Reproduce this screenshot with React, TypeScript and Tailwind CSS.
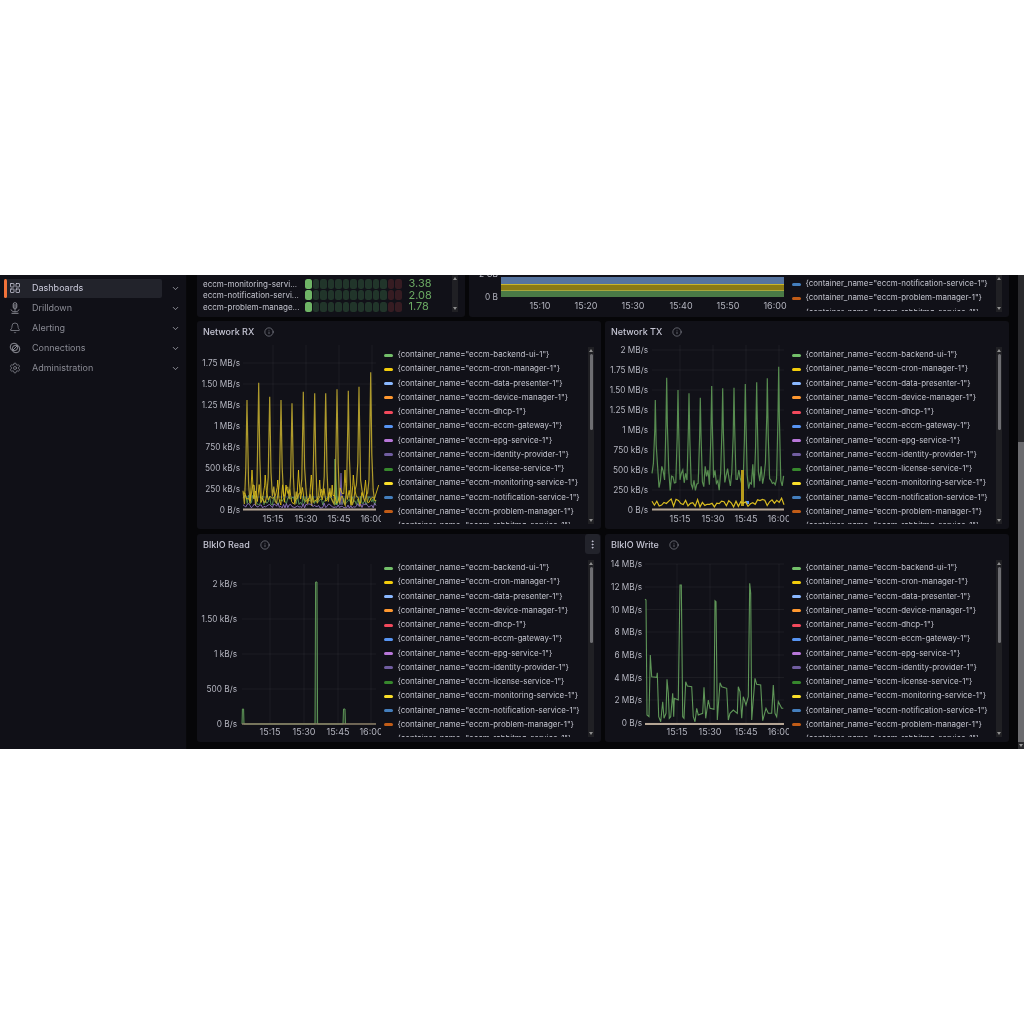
import { Bell, ChevronDown, Info, LayoutGrid, MoreVertical, Settings } from 'lucide-react';

type Pt = [number, number];

const SERIES = [
  ['eccm-backend-ui-1', 'bg-[#73bf69]'],
  ['eccm-cron-manager-1', 'bg-[#f2cc0c]'],
  ['eccm-data-presenter-1', 'bg-[#8ab8ff]'],
  ['eccm-device-manager-1', 'bg-[#ff9830]'],
  ['eccm-dhcp-1', 'bg-[#f2495c]'],
  ['eccm-eccm-gateway-1', 'bg-[#5794f2]'],
  ['eccm-epg-service-1', 'bg-[#b877d9]'],
  ['eccm-identity-provider-1', 'bg-[#705da0]'],
  ['eccm-license-service-1', 'bg-[#37872d]'],
  ['eccm-monitoring-service-1', 'bg-[#fade2a]'],
  ['eccm-notification-service-1', 'bg-[#447ebc]'],
  ['eccm-problem-manager-1', 'bg-[#c15c17]'],
  ['eccm-rabbitmq-service-1', 'bg-[#890f02]'],
];

const rng = (seed: number) => () => {
  seed = (seed * 1664525 + 1013904223) % 4294967296;
  return seed / 4294967296;
};

const toPath = (pts: Pt[]) => pts.map(([x, y]) => `${x.toFixed(1)},${y.toFixed(1)}`).join(' ');

// peaks with a noisy floor between them, all in page coordinates
function spikes(peaks: Pt[], x0: number, x1: number, top: number, bottom: number, seed: number, step = 1.4): string {
  const r = rng(seed);
  const pts: Pt[] = [];
  for (let x = x0; x <= x1; x += step) {
    let y = top + (bottom - top) * Math.pow(r(), 0.7);
    for (const [px, py] of peaks) {
      const d = Math.abs(x - px);
      if (d < 3) y = Math.min(y, bottom - (bottom - py) * Math.pow(1 - d / 3, 2));
    }
    pts.push([x, y]);
  }
  // the samples step over the tips, so put the tips in by hand
  return toPath([...pts, ...peaks].sort((a, b) => a[0] - b[0]));
}

const RX_PEAKS: Pt[] = [[21, 180], [56, 128], [89, 170], [123, 180], [156, 190], [190, 155], [224, 160], [257, 160], [291, 148], [325, 152], [357, 140], [392, 97]].map(([x, y]) => [240 + x / 3, 340 + y / 3]);
const RX_MINOR: Pt[] = RX_PEAKS.map(([x], i) => [x + 5 + (i % 3) * 1.5, 470 + (i % 4) * 5]);
const TX_PEAKS: Pt[] = [[46, 180], [80, 113], [114, 150], [147, 160], [181, 173], [215, 138], [248, 145], [282, 143], [316, 132], [350, 127], [382, 115], [416, 80]].map(([x, y]) => [640 + x / 3, 340 + y / 3]);
const WRITE: Pt[] = ([[15, 148], [18, 150], [21, 495], [27, 500], [31, 315], [35, 380], [50, 382], [52, 368], [56, 500], [62, 515], [68, 455], [72, 505], [78, 490], [81, 388], [85, 430], [88, 505], [92, 500], [98, 430], [101, 500], [103, 445], [115, 450], [120, 105], [124, 105], [128, 500], [132, 505], [137, 395], [142, 408], [155, 410], [160, 500], [165, 515], [170, 475], [175, 495], [188, 490], [192, 412], [197, 505], [205, 450], [210, 475], [222, 478], [225, 152], [228, 155], [232, 510], [240, 398], [245, 410], [260, 415], [265, 510], [270, 490], [280, 480], [292, 490], [295, 410], [300, 425], [305, 505], [310, 440], [318, 465], [325, 440], [329, 100], [332, 130], [335, 510], [345, 385], [350, 403], [362, 405], [368, 512], [378, 475], [385, 490], [395, 490], [400, 405], [405, 490], [410, 500], [415, 455], [425, 475], [430, 475]] as Pt[]).map(([x, y]) => [640 + x / 3, 550 + y / 3] as Pt);

type Tick = [string, number];

function Axes({ ticks, times, right, x0, x1, top, bottom }: { ticks: Tick[]; times: number[]; right: number; x0: number; x1: number; top: number; bottom: number }) {
  const labels = ['15:15', '15:30', '15:45', '16:00'];
  return (
    <g className="fill-[#b4b5bf]">
      {ticks.map(([label, y]) => (
        <g key={label}>
          <line x1={x0} x2={x1} y1={y} y2={y} stroke="#ffffff" strokeOpacity={0.05} />
          <text x={right} y={y + 3} textAnchor="end" className="text-[8.25px]">{label}</text>
        </g>
      ))}
      {times.map((x, i) => (
        <g key={x}>
          <line x1={x} x2={x} y1={top} y2={bottom} stroke="#ffffff" strokeOpacity={0.05} />
          <text x={x} y={bottom + 12} textAnchor="middle" className="text-[9px]">{labels[i]}</text>
        </g>
      ))}
    </g>
  );
}

function RxChart() {
  return (
    <svg viewBox="197 343 184 186" className="w-[184px] h-[186px] shrink-0">
      <Axes x0={243} x1={376} top={345} bottom={510} right={240} times={[273, 306, 339, 372]}
        ticks={[['1.75 MB/s', 363], ['1.50 MB/s', 384], ['1.25 MB/s', 405], ['1 MB/s', 426], ['750 kB/s', 447], ['500 kB/s', 468], ['250 kB/s', 489], ['0 B/s', 510]]} />
      <polyline points={spikes([], 243, 376, 494, 505, 31)} fill="none" stroke="#5c9a55" strokeWidth={0.9} />
      <line x1={243} x2={376} y1={497} y2={497} stroke="#447ebc" strokeOpacity={0.5} />
      <polyline points="335,505 335,459 337,505" fill="none" stroke="#73bf69" strokeOpacity={0.8} strokeWidth={1.4} />
      <polyline points="340,505 341,473 342,505" fill="none" stroke="#705da0" strokeWidth={1.2} />
      <polyline points={spikes(RX_PEAKS, 243, 376, 482, 506, 7)} fill="#f2cc0c" fillOpacity={0.06} stroke="#bfa92f" strokeOpacity={0.9} strokeWidth={1.2} />
      <polyline points={spikes(RX_MINOR, 243, 376, 484, 507, 77, 1.8)} fill="none" stroke="#d9bb18" strokeOpacity={0.9} strokeWidth={1} />
      <polyline points={spikes([], 243, 376, 503, 508, 13)} fill="none" stroke="#8f74c0" strokeWidth={0.9} />
      <line x1={243} x2={376} y1={509.5} y2={509.5} stroke="#b5a594" strokeWidth={2} />
    </svg>
  );
}

function TxChart() {
  return (
    <svg viewBox="605 343 184 186" className="w-[184px] h-[186px] shrink-0">
      <Axes x0={652} x1={784} top={345} bottom={510} right={648} times={[680, 713, 746, 779]}
        ticks={[['2 MB/s', 350], ['1.75 MB/s', 370], ['1.50 MB/s', 390], ['1.25 MB/s', 410], ['1 MB/s', 430], ['750 kB/s', 450], ['500 kB/s', 470], ['250 kB/s', 490], ['0 B/s', 510]]} />
      <polyline points={spikes(TX_PEAKS, 652, 784, 463, 491, 19)} fill="#73bf69" fillOpacity={0.05} stroke="#578c50" strokeWidth={1.2} />
      <rect x={741} y={470} width={3} height={36} fill="#b89c1c" />
      <rect x={746} y={501} width={3} height={3} fill="#5794f2" />
      <polyline points={spikes([], 652, 784, 498, 507, 5, 2.4)} fill="none" stroke="#d9bc20" strokeWidth={1.2} />
      <line x1={652} x2={784} y1={509.5} y2={509.5} stroke="#b5a594" strokeWidth={2} />
    </svg>
  );
}

function ReadChart() {
  return (
    <svg viewBox="197 556 184 186" className="w-[184px] h-[186px] shrink-0">
      <Axes x0={242} x1={376} top={564} bottom={723} right={237} times={[270, 304, 338, 371]}
        ticks={[['2 kB/s', 584], ['1.50 kB/s', 619], ['1 kB/s', 654], ['500 B/s', 689], ['0 B/s', 723.5]]} />
      <polyline points="242,724 242.4,709 243.6,709 244,724 315,724 315.6,582 317,582 317.6,724 343,724 343.5,709 345,709 345.5,724" fill="#73bf69" fillOpacity={0.2} stroke="#5e9557" />
      <line x1={242} x2={376} y1={724} y2={724} stroke="#8d8168" strokeWidth={1.4} />
    </svg>
  );
}

function WriteChart() {
  return (
    <svg viewBox="605 556 184 186" className="w-[184px] h-[186px] shrink-0">
      <Axes x0={645} x1={784} top={564} bottom={723} right={642} times={[677, 710, 746, 779]}
        ticks={[['14 MB/s', 564], ['12 MB/s', 587], ['10 MB/s', 609.5], ['8 MB/s', 632], ['6 MB/s', 655], ['4 MB/s', 677.5], ['2 MB/s', 700], ['0 B/s', 723]]} />
      <polyline points={toPath(WRITE)} fill="none" stroke="#5f9658" strokeWidth={1.1} />
      <line x1={645} x2={784} y1={724} y2={724} stroke="#b5a594" strokeWidth={1.8} />
    </svg>
  );
}

function LegendRow({ name, color }: { name: string; color: string }) {
  return (
    <div className="flex items-center h-[14.25px] gap-[5px]">
      <span className={`w-[9px] h-[3px] rounded-sm shrink-0 ${color}`} />
      <span className="text-[7.9px] text-[#c4c5cf] whitespace-nowrap">{`{container_name="${name}"}`}</span>
    </div>
  );
}

function Scrollbar({ thumb = true }: { thumb?: boolean }) {
  return (
    <div className="w-[6px] shrink-0 flex flex-col items-center bg-[#202024]">
      <span className="mt-[2px] border-x-[2px] border-x-transparent border-b-[3px] border-b-[#8e8e8e]" />
      {thumb && <span className="mt-[2px] w-[3px] h-[76px] rounded-sm bg-[#6e6e72]" />}
      <span className="mt-auto mb-[2px] border-x-[2px] border-x-transparent border-t-[3px] border-t-[#8e8e8e]" />
    </div>
  );
}

function ChartPanel({ title, menu, chart }: { title: string; menu?: boolean; chart: React.ReactNode }) {
  return (
    <section className="relative h-[208px] rounded-[3px] bg-[#111118] overflow-hidden flex flex-col">
      <header className="h-[22px] flex items-center gap-[10px] pl-[6px] shrink-0">
        <span className="text-[9px] font-medium text-[#c6c6d4] whitespace-nowrap">{title}</span>
        <Info size={10} strokeWidth={1.4} className="text-[#9a9ba5]" />
      </header>
      {menu && (
        <button className="absolute right-[1px] top-0 w-[15px] h-[20px] rounded-[3px] bg-[#22232b] flex items-center justify-center text-[#ccccdc]">
          <MoreVertical size={11} />
        </button>
      )}
      <div className="flex flex-1 min-h-0">
        {chart}
        <div className="flex-1 overflow-hidden ml-[2.5px] mt-[5px] mb-[5px]">
          {SERIES.map(([name, color]) => <LegendRow key={name} name={name} color={color} />)}
        </div>
        <div className="flex mt-[4px] mb-[5px] mr-[7px]"><Scrollbar /></div>
      </div>
    </section>
  );
}

const DrillIcon = () => (
  <svg viewBox="0 0 12 12" className="w-[12px] h-[12px]" fill="none" stroke="currentColor" strokeWidth={1}>
    <rect x={4.2} y={0.7} width={3.6} height={6} rx={1.6} />
    <path d="M4.2 3h3.6M4.2 5h3.6M6 6.7v2M2 7.5c.5 1.5 2 2.3 4 2.3s3.5-.8 4-2.3M2.5 11.3h7" />
  </svg>
);

const ConnectionsIcon = () => (
  <svg viewBox="0 0 12 12" className="w-[12px] h-[12px]" fill="none" stroke="currentColor" strokeWidth={1}>
    <circle cx={5} cy={5} r={3.8} />
    <circle cx={7} cy={7} r={3.8} />
    <path d="M4 8l4-4" />
  </svg>
);

const NAV = [
  { label: 'Dashboards', icon: <LayoutGrid size={12} strokeWidth={1.5} />, active: true },
  { label: 'Drilldown', icon: <DrillIcon /> },
  { label: 'Alerting', icon: <Bell size={12} strokeWidth={1.5} /> },
  { label: 'Connections', icon: <ConnectionsIcon /> },
  { label: 'Administration', icon: <Settings size={12} strokeWidth={1.5} /> },
];

function Sidebar() {
  return (
    <aside className="w-[187px] shrink-0 bg-[#101017] pt-[3px] pl-[4px] border-r border-[#08080a]">
      {NAV.map((item) => (
        <div key={item.label} className="flex items-center h-[20px]">
          <div className={`w-[158px] h-[19px] flex items-center rounded-[2px] ${item.active ? 'bg-[#22232b] text-[#ccccdc]' : 'text-[#8a8b94]'}`}>
            <span className={`w-[2.5px] h-full rounded-sm shrink-0 ${item.active ? 'bg-[#f2733a]' : ''}`} />
            <span className="w-[17px] flex justify-center">{item.icon}</span>
            <span className="ml-[8.5px] text-[9px] whitespace-nowrap">{item.label}</span>
          </div>
          <ChevronDown size={9} strokeWidth={2} className="ml-[8.5px] text-[#b0b1ba]" />
        </div>
      ))}
    </aside>
  );
}

const HEAT = [
  ['eccm-monitoring-servi...', '3.38'],
  ['eccm-notification-servi...', '2.08'],
  ['eccm-problem-manage...', '1.78'],
];

function HeatPanel() {
  return (
    <section className="h-[42px] rounded-b-[3px] bg-[#111118] flex overflow-hidden pl-[6px] pr-[7px]">
      <div className="flex-1 pt-[3px]">
        {HEAT.map(([name, value]) => (
          <div key={name} className="flex items-center h-[11.5px]">
            <span className="w-[102px] text-[8px] text-[#c4c5cf] whitespace-nowrap">{name}</span>
            <div className="flex gap-[1px]">
              {Array.from({ length: 13 }, (_, i) => (
                <span key={i} className={`w-[6.5px] h-[10px] rounded-[2.5px] ${i === 0 ? 'bg-[#6fb566]' : i > 10 ? 'bg-[#361c22]' : 'bg-[#21352a]'}`} />
              ))}
            </div>
            <span className="ml-[7px] text-[11px] leading-none text-[#6aa862]">{value}</span>
          </div>
        ))}
      </div>
      <div className="flex h-[37px]"><Scrollbar thumb={false} /></div>
    </section>
  );
}

function VolumePanel() {
  return (
    <section className="h-[42px] rounded-b-[3px] bg-[#111118] flex overflow-hidden">
      <svg viewBox="469 275 320 42" className="w-[320px] h-[42px] shrink-0">
        <g className="fill-[#b4b5bf]">
          <text x={498} y={277} textAnchor="end" className="text-[8.25px]">2 GB</text>
          <text x={498} y={299.5} textAnchor="end" className="text-[8.25px]">0 B</text>
          {[['15:10', 540], ['15:20', 586], ['15:30', 633], ['15:40', 681], ['15:50', 728], ['16:00', 775]].map(([t, x]) => (
            <text key={t} x={x} y={309} textAnchor="middle" className="text-[9px]">{t}</text>
          ))}
        </g>
        <rect x={501} y={277} width={283} height={7} fill="#56749f" />
        <rect x={501} y={284} width={283} height={6} fill="#8a7a14" />
        <rect x={501} y={284} width={283} height={1} fill="#c9b52a" />
        <rect x={501} y={290} width={283} height={7} fill="#4a7a46" />
        <rect x={501} y={290} width={283} height={1} fill="#a8a63a" />
      </svg>
      <div className="flex-1 overflow-hidden ml-[2.5px] pt-[1.9px] h-[36px]">
        {SERIES.slice(10).map(([name, color]) => <LegendRow key={name} name={name} color={color} />)}
      </div>
      <div className="flex h-[37px] mr-[7px]"><Scrollbar thumb={false} /></div>
    </section>
  );
}

export default function App() {
  return (
    <div className="min-h-[1024px] bg-white pt-[275px] font-[Inter,sans-serif]">
      <div className="h-[474px] flex bg-[#060608] overflow-hidden blur-[0.35px]">
        <Sidebar />
        <main className="flex-1 min-w-0 pl-[10px] pr-[9px] flex flex-col gap-[4px]">
          <div className="grid grid-cols-[268px_540px] gap-[4px]">
            <HeatPanel />
            <VolumePanel />
          </div>
          <div className="grid grid-cols-2 gap-[4px]">
            <ChartPanel title="Network RX" chart={<RxChart />} />
            <ChartPanel title="Network TX" chart={<TxChart />} />
          </div>
          <div className="grid grid-cols-2 gap-[4px] mt-[1px]">
            <ChartPanel title="BlkIO Read" menu chart={<ReadChart />} />
            <ChartPanel title="BlkIO Write" chart={<WriteChart />} />
          </div>
        </main>
        <div className="w-[6px] shrink-0 bg-[#29292c] flex flex-col">
          <span className="mt-[167px] h-[300px] bg-[#6b6b6e]" />
          <span className="mx-auto mt-[2px] border-x-[2px] border-x-transparent border-t-[3px] border-t-[#9a9a9a]" />
        </div>
      </div>
    </div>
  );
}
